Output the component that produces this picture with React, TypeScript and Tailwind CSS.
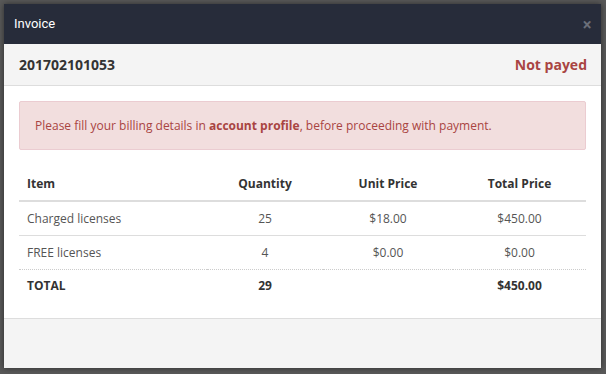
import React from 'react';

const rows = [
  { item: 'Charged licenses', qty: '25', unit: '$18.00', total: '$450.00' },
  { item: 'FREE licenses', qty: '4', unit: '$0.00', total: '$0.00' },
];

export default function App() {
  return (
    <div className="h-[374px] w-[606px] overflow-hidden bg-[#595959] p-[4px] pr-[5px] font-['Open_Sans',sans-serif]">
      <div className="flex h-[364px] flex-col overflow-hidden bg-white shadow-[0_0_6px_rgba(0,0,0,0.5)]">
        <div className="flex h-[40px] shrink-0 items-center justify-between bg-[#272c3a] pl-[10px] pr-[9px]">
          <span className="font-['Roboto',sans-serif] text-[13px] text-white">Invoice</span>
          <span className="text-[17px] leading-none font-bold text-[#6b6f79]">×</span>
        </div>
        <div className="flex h-[42px] shrink-0 items-center justify-between border-b border-[#dddddd] bg-[#f4f4f4] pl-[15px] pr-[14px]">
          <span className="text-[14px] font-bold text-[#333333]">201702101053</span>
          <span className="text-[14px] font-bold text-[#a94442]">Not payed</span>
        </div>
        <div className="flex-1 px-[15px] pt-[15px]">
          <div className="flex h-[49px] items-center rounded-[2px] border border-[#ebccd1] bg-[#f2dede] px-[15px] text-[12px] text-[#a94442]">
            <span>
              Please fill your billing details in <b>account profile</b>, before proceeding with payment.
            </span>
          </div>
          <table className="mt-[18px] w-full border-collapse text-[12px] text-[#555555]">
            <thead>
              <tr className="border-b-2 border-[#dddddd] text-[#333333]">
                <th className="h-[33px] w-[188px] px-[8px] text-left font-bold">Item</th>
                <th className="w-[116px] text-center font-bold">Quantity</th>
                <th className="w-[130px] text-center font-bold">Unit Price</th>
                <th className="text-center font-bold">Total Price</th>
              </tr>
            </thead>
            <tbody>
              {rows.map((r, i) => (
                <tr key={r.item} className={i === 0 ? 'border-b border-[#dddddd]' : 'border-b border-dotted border-[#cccccc]'}>
                  <td className="h-[34px] px-[8px] pt-[2px]">{r.item}</td>
                  <td className="pt-[2px] text-center">{r.qty}</td>
                  <td className="pt-[2px] text-center">{r.unit}</td>
                  <td className="pt-[2px] text-center">{r.total}</td>
                </tr>
              ))}
              <tr className="font-bold text-[#333333]">
                <td className="h-[34px] px-[8px]">TOTAL</td>
                <td className="text-center">29</td>
                <td />
                <td className="text-center">$450.00</td>
              </tr>
            </tbody>
          </table>
        </div>
        <div className="h-[50px] shrink-0 border-t border-[#dddddd] bg-[#f4f4f4]" />
      </div>
    </div>
  );
}
